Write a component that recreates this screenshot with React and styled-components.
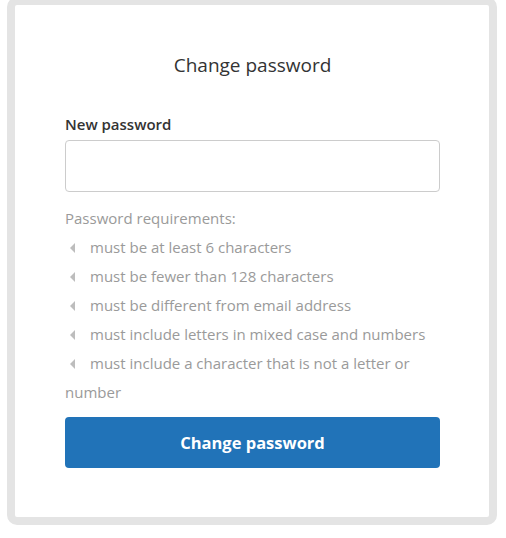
import React from 'react'
import styled, { createGlobalStyle } from 'styled-components'

const GlobalStyle = createGlobalStyle`
  body {
    margin: 0;
    background: #fff;
    font-family: "Open Sans", "Liberation Sans", sans-serif;
  }
`

const Page = styled.div`
  padding: 0 9px 13px 7px;
  margin-top: -3px;
`

const Card = styled.div`
  border: 8px solid #e4e4e4;
  border-radius: 10px;
  background: #fff;
  padding: 46px 49px 49px 50px;
`

const Title = styled.h1`
  margin: 0 0 35px;
  text-align: center;
  font-size: 19px;
  font-weight: 400;
  color: #333;
  line-height: 28px;
`

const Label = styled.label`
  display: block;
  font-size: 15px;
  font-weight: 600;
  color: #333;
  line-height: 20px;
  margin-bottom: 6px;
`

const Input = styled.input`
  display: block;
  box-sizing: border-box;
  width: 100%;
  height: 52px;
  border: 1px solid #ccc;
  border-radius: 4px;
  outline: none;
  font-family: inherit;
  font-size: 15px;
  padding: 0 12px;
`

const Requirements = styled.div`
  margin-top: 12px;
  font-size: 15px;
  color: #9a9a9a;
  line-height: 29px;
`

const List = styled.ul`
  margin: 0;
  padding: 0;
  list-style: none;
`

const Item = styled.li`
  &::before {
    content: '';
    display: inline-block;
    width: 0;
    height: 0;
    margin: 0 15px 0 5px;
    border-top: 5px solid transparent;
    border-bottom: 5px solid transparent;
    border-right: 5px solid #bdbdbd;
    vertical-align: 0;
  }
`

const Button = styled.button`
  display: block;
  width: 100%;
  height: 51px;
  margin-top: 10px;
  border: none;
  border-radius: 4px;
  background: #2173b8;
  color: #fff;
  font-family: inherit;
  font-size: 16.5px;
  font-weight: 700;
  cursor: pointer;
`

const rules = [
  'must be at least 6 characters',
  'must be fewer than 128 characters',
  'must be different from email address',
  'must include letters in mixed case and numbers',
  'must include a character that is not a letter or number'
]

export default function App() {
  return (
    <Page>
      <GlobalStyle />
      <Card>
        <Title>Change password</Title>
        <Label htmlFor="new-password">New password</Label>
        <Input id="new-password" type="password" />
        <Requirements>
          Password requirements:
          <List>
            {rules.map(rule => (
              <Item key={rule}>{rule}</Item>
            ))}
          </List>
        </Requirements>
        <Button>Change password</Button>
      </Card>
    </Page>
  )
}
